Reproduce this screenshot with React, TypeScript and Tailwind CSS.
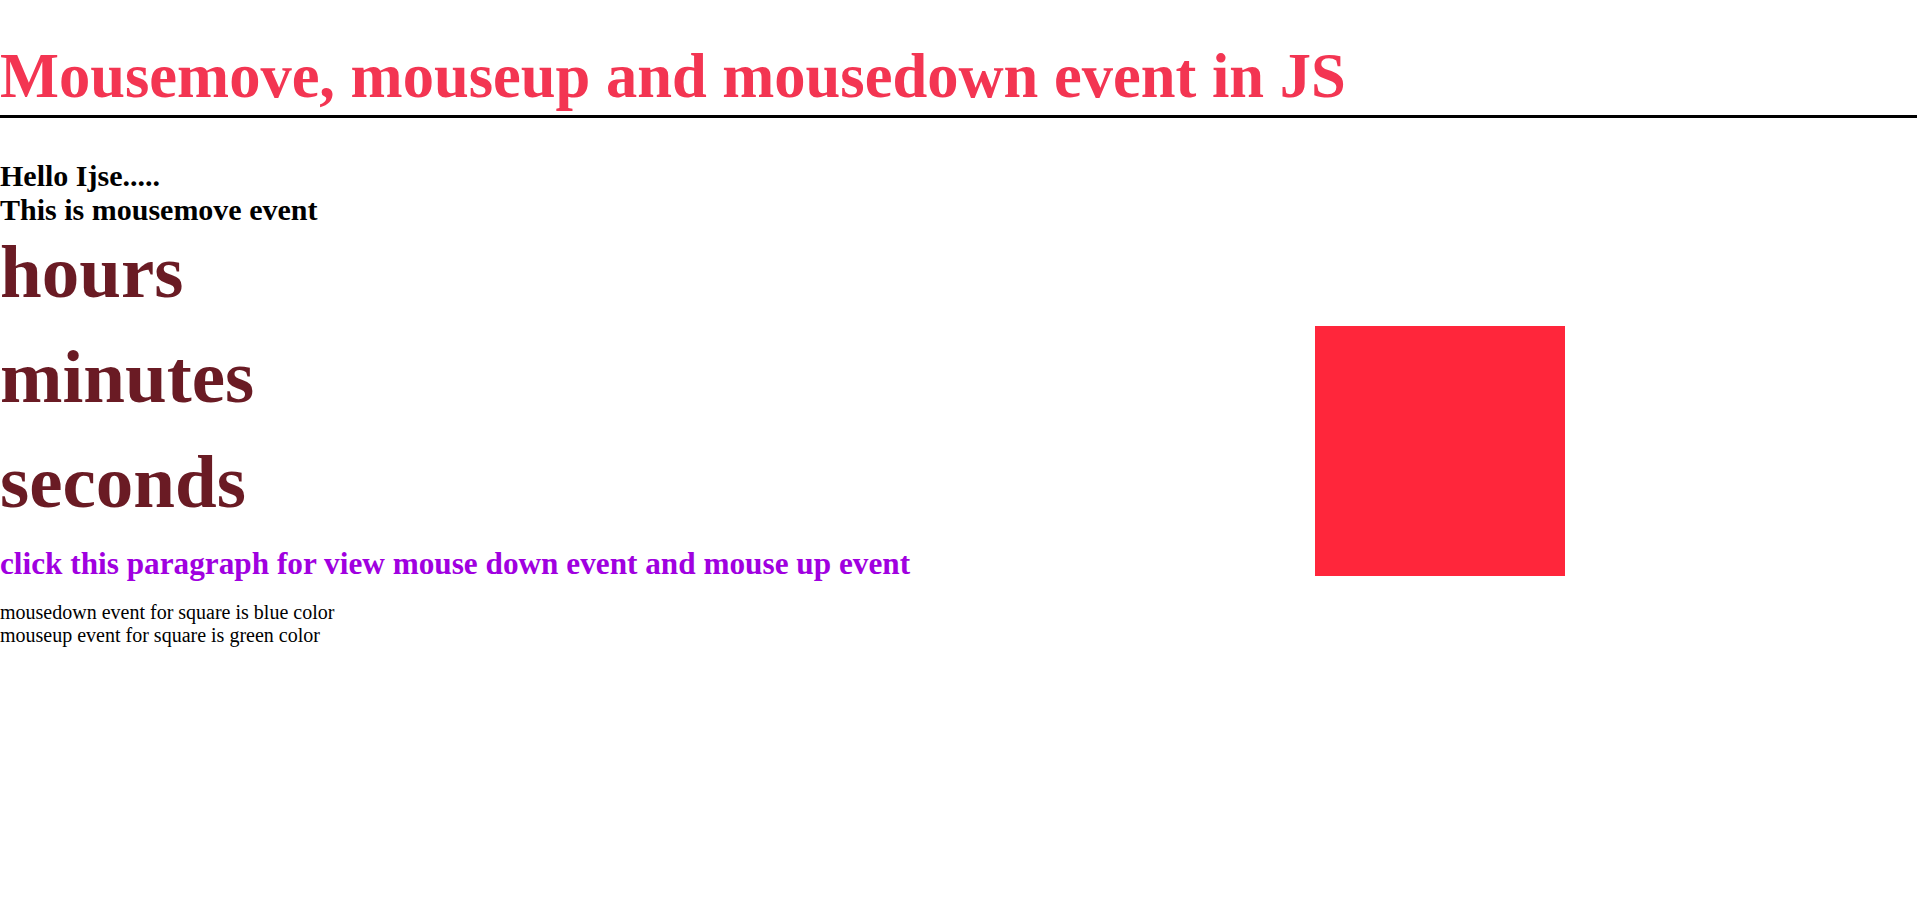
export default function App() {
  return (
    <div className="min-h-screen bg-white font-['Liberation_Serif','Times_New_Roman',serif] leading-[normal] text-black">
      <h1 className="mt-[40px] border-b-[3px] border-black pb-[2px] text-[62.5px] font-bold text-[#f33552]">
        Mousemove, mouseup and mousedown event in JS
      </h1>

      <div className="mt-[41px] flex items-start">
        <div className="w-[1315px] shrink-0">
          <div className="text-[30px] font-bold">
            <div>Hello Ijse.....</div>
            <div>This is mousemove event</div>
          </div>

          <div className="mt-[2px] flex flex-col gap-[19px] text-[75px] font-bold text-[#6a1b24]">
            <div>hours</div>
            <div>minutes</div>
            <div>seconds</div>
          </div>

          <p className="mt-[21px] text-[31.25px] font-bold text-[#a000e0]">
            click this paragraph for view mouse down event and mouse up event
          </p>

          <div className="mt-[19px] text-[20px]">
            <div>mousedown event for square is blue color</div>
            <div>mouseup event for square is green color</div>
          </div>
        </div>

        <div className="mt-[167px] h-[250px] w-[250px] shrink-0 bg-[#ff263b]" />
      </div>
    </div>
  );
}
